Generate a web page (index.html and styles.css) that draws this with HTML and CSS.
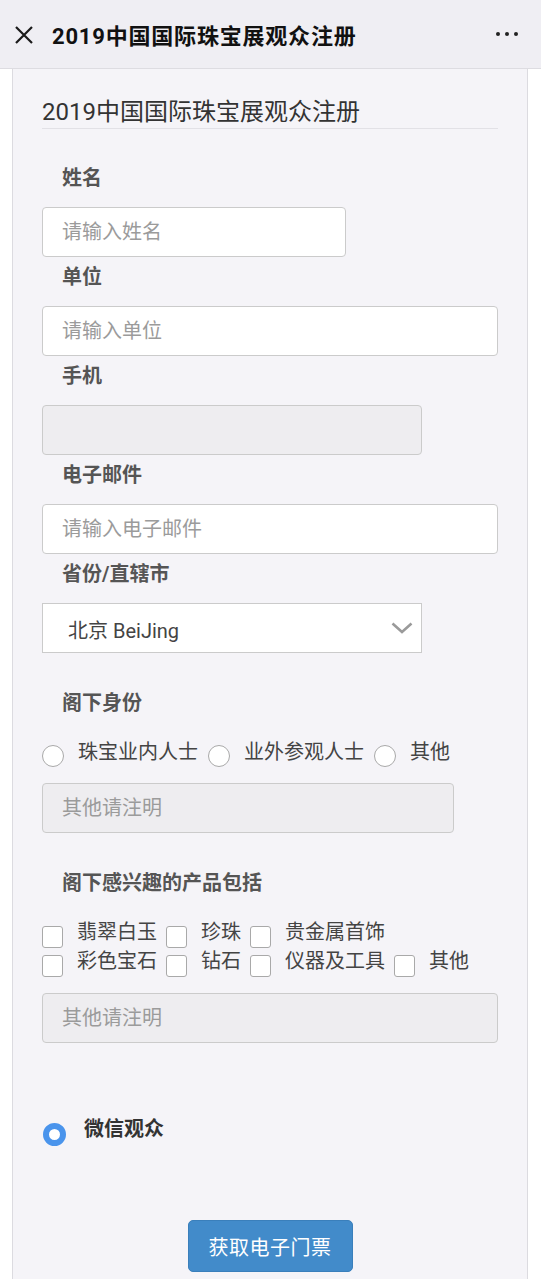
FILE: index.html
```html
<!DOCTYPE html>
<html lang="zh-CN">
<head>
    <meta charset="UTF-8">
    <meta name="viewport" content="width=device-width, initial-scale=1.0">
    <title>2019中国国际珠宝展观众注册</title>
    <link rel="stylesheet" href="styles.css">
</head>
<body>
    <!-- top bar of the wechat webview -->
    <div class="topbar">
        <svg class="close" width="18" height="18" viewBox="0 0 18 18">
            <path d="M1 1 L17 17 M17 1 L1 17" stroke="#1a1a1a" stroke-width="2.2" fill="none"/>
        </svg>
        <div class="bar-title">2019中国国际珠宝展观众注册</div>
        <div class="more"><span></span><span></span><span></span></div>
    </div>

    <div class="page">
        <form class="card" onsubmit="return false;">
            <h2 class="form-title">2019中国国际珠宝展观众注册</h2>

            <div class="field-label first">姓名</div>
            <input class="field w-short" type="text" placeholder="请输入姓名">

            <div class="field-label">单位</div>
            <input class="field w-full" type="text" placeholder="请输入单位">

            <div class="field-label">手机</div>
            <input class="field w-mid" type="text" disabled>

            <div class="field-label">电子邮件</div>
            <input class="field w-full" type="text" placeholder="请输入电子邮件">

            <div class="field-label">省份/直辖市</div>
            <div class="field select w-mid">
                <span>北京 BeiJing</span>
                <svg width="22" height="12" viewBox="0 0 22 12">
                    <path d="M1.5 1.5 L11 10 L20.5 1.5" stroke="#9a9a9a" stroke-width="2.6" fill="none"/>
                </svg>
            </div>

            <div class="field-label group">阁下身份</div>
            <div class="radio-row">
                <label class="opt"><span class="radio"></span><span class="opt-text">珠宝业内人士</span></label>
                <label class="opt"><span class="radio"></span><span class="opt-text">业外参观人士</span></label>
                <label class="opt"><span class="radio"></span><span class="opt-text">其他</span></label>
            </div>
            <input class="field w-other after-opts" type="text" placeholder="其他请注明" disabled>

            <div class="field-label group">阁下感兴趣的产品包括</div>
            <div class="check-grid">
                <label class="chk"><span class="box"></span><span class="opt-text">翡翠白玉</span></label>
                <label class="chk"><span class="box"></span><span class="opt-text">珍珠</span></label>
                <label class="chk"><span class="box"></span><span class="opt-text">贵金属首饰</span></label>
                <label class="chk"><span class="box"></span><span class="opt-text">彩色宝石</span></label>
                <label class="chk"><span class="box"></span><span class="opt-text">钻石</span></label>
                <label class="chk"><span class="box"></span><span class="opt-text">仪器及工具</span></label>
                <label class="chk"><span class="box"></span><span class="opt-text">其他</span></label>
            </div>
            <input class="field w-full after-opts" type="text" placeholder="其他请注明" disabled>

            <div class="wechat">
                <span class="radio on"></span>
                <span class="wechat-text">微信观众</span>
            </div>

            <div class="actions">
                <button class="btn" type="submit">获取电子门票</button>
            </div>
        </form>
    </div>
</body>
</html>
```

FILE: styles.css
```css
* {
    box-sizing: border-box;
}

body {
    margin: 0;
    background: #fff;
    font-family: Roboto, "Noto Sans CJK SC", sans-serif;
    color: #333;
}

/* top bar */
.topbar {
    height: 69px;
    background: #efeef3;
    border-bottom: 1px solid #dddce1;
    display: flex;
    align-items: center;
    padding: 0 23px 0 15px;
}

.close {
    margin-top: 1px;
}

.bar-title {
    margin-left: 19px;
    font-size: 22px;
    font-weight: bold;
    letter-spacing: 0.8px;
    color: #111;
    flex: 1;
}

.more {
    display: flex;
    gap: 5px;
}

.more span {
    width: 4px;
    height: 4px;
    border-radius: 50%;
    background: #222;
}

/* form card */
.page {
    padding: 0 13px 0 12px;
}

.card {
    background: #f5f4f8;
    border-left: 1px solid #dcdbe0;
    border-right: 1px solid #dcdbe0;
    padding: 31px 29px 40px 29px;
    min-height: 1210px;
}

.form-title {
    margin: 0;
    font-size: 24px;
    line-height: 25px;
    font-weight: normal;
    color: #333;
    padding-bottom: 3px;
    border-bottom: 1px solid #e2e1e6;
}

.field-label {
    font-size: 20px;
    line-height: 20px;
    font-weight: bold;
    color: #555;
    padding-left: 20px;
    margin-bottom: 19px;
}

.field-label.first {
    margin-top: 39px;
}

/* margins collapse with the input above */
.field-label.group {
    margin-top: 40px;
    margin-bottom: 25px;
}

.field {
    display: block;
    height: 50px;
    margin: 0 0 10px 0;
    padding: 0 19px;
    border: 1px solid #cbcbcb;
    border-radius: 4px;
    background: #fff;
    font-family: inherit;
    font-size: 20px;
    color: #333;
    outline: none;
}

.field::placeholder {
    color: #9b9b9b;
}

.field:disabled {
    background: #eeedf0;
}

.w-short { width: 304px; }
.w-mid { width: 380px; }
.w-other { width: 412px; }
.w-full { width: 456px; }

.select {
    display: flex;
    align-items: center;
    justify-content: space-between;
    padding: 0 8px 0 25px;
    border-radius: 0;
    color: #444;
}

.select span {
    margin-top: 3px;
}

/* radios and checkboxes */
.radio-row {
    display: flex;
    height: 28px;
}

.opt {
    display: flex;
    align-items: flex-start;
    margin-right: 10px;
}

.radio {
    width: 22px;
    height: 22px;
    margin: 7px 14px 0 0;
    border: 1px solid #a9a9a9;
    border-radius: 50%;
    background: #fff;
    flex-shrink: 0;
}

.opt-text {
    font-size: 20px;
    line-height: 28px;
    color: #444;
    white-space: nowrap;
}

.after-opts {
    margin-top: 17px;
}

.check-grid {
    display: flex;
    flex-wrap: wrap;
    width: 456px;
}

.chk {
    display: flex;
    align-items: flex-start;
    margin-right: 9px;
    height: 29px;
}

.chk .opt-text {
    line-height: 29px;
}

.box {
    width: 21px;
    height: 22px;
    margin: 8px 14px 0 0;
    border: 1px solid #a9a9a9;
    border-radius: 3px;
    background: #fff;
    flex-shrink: 0;
}

/* wechat viewer */
.wechat {
    display: flex;
    align-items: flex-start;
    margin-top: 72px;
    height: 28px;
}

.radio.on {
    width: 23px;
    height: 23px;
    margin: 8px 18px 0 1px;
    border: 6px solid #4a94ec;
    background: #fff;
}

.wechat-text {
    font-size: 20px;
    line-height: 28px;
    font-weight: bold;
    color: #333;
}

.actions {
    display: flex;
    justify-content: center;
    margin-top: 77px;
}

.btn {
    width: 165px;
    height: 52px;
    background: #428bca;
    border: 1px solid #3a7fbb;
    border-radius: 5px;
    color: #fff;
    font-family: inherit;
    font-size: 20px;
    letter-spacing: 0.5px;
}
```
